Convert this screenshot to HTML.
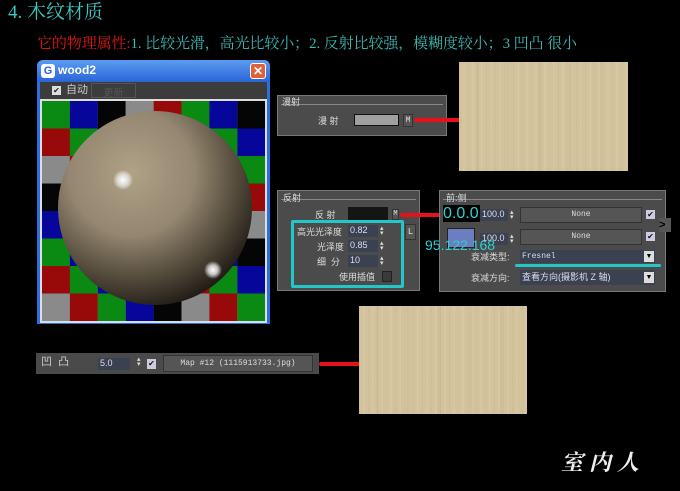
<!DOCTYPE html>
<html><head><meta charset="utf-8"><style>
*{margin:0;padding:0;box-sizing:border-box}
body{width:680px;height:491px;background:#000;position:relative;overflow:hidden;font-family:"Liberation Sans","Noto Sans CJK SC",sans-serif}
.a{position:absolute}
.t{color:#dcdcdc;font-size:9px;line-height:10px;white-space:nowrap}
.wood{background:
repeating-linear-gradient(90deg,rgba(150,120,70,.07) 0 1px,transparent 1px 4px,rgba(255,255,240,.07) 4px 6px,transparent 6px 9px),
repeating-linear-gradient(90deg,transparent 0 17px,rgba(160,130,80,.08) 17px 20px,transparent 20px 31px),
#d3c39c}
.pan{background:#4b4b4b;border:1px solid #777}
.in{background:#3a4150;color:#dde;font-size:9px;line-height:11px;padding-left:2px}
.btn{background:#555;border:1px solid #333;color:#ddd;font-size:8px;text-align:center;font-family:"Liberation Mono",monospace}
.red{background:#e8101a;height:4px;border-radius:2px}
.cy{color:#2ed0d0}
</style></head><body>
<div class="a cy" style="left:8px;top:2px;font-size:19px;line-height:22px;font-family:'Liberation Serif','Noto Serif CJK SC',serif;color:#3cc8c0">4. 木纹材质</div>
<div class="a" style="left:37px;top:35px;font-size:15px;line-height:18px;white-space:nowrap;letter-spacing:-0.1px;font-family:'Liberation Serif','Noto Serif CJK SC',serif;color:#3cb8b0"><span style="color:#e01818">它的物理属性:</span>1. 比较光滑，高光比较小；2. 反射比较强，模糊度较小；3 凹凸 很小</div>

<!-- window -->
<div class="a" style="left:37px;top:60px;width:233px;height:264px;background:#2a6ee0;border-radius:6px 6px 0 0"></div>
<div class="a" style="left:37px;top:60px;width:233px;height:22px;background:linear-gradient(#5a9cf0,#2a64d8);border-radius:6px 6px 0 0"></div>
<div class="a" style="left:41px;top:64px;width:14px;height:14px;background:#fff;border-radius:3px;color:#2a64d8;font-size:11px;font-weight:bold;text-align:center;line-height:14px">G</div>
<div class="a" style="left:58px;top:63px;color:#fff;font-size:12px;font-weight:bold">wood2</div>
<div class="a" style="left:250px;top:63px;width:16px;height:16px;background:#e0603a;border:1px solid #fff;border-radius:3px;color:#fff;font-size:12px;text-align:center;line-height:14px;font-weight:bold">✕</div>
<div class="a" style="left:40px;top:82px;width:227px;height:17px;background:#3c3c3c"></div>
<div class="a" style="left:52px;top:86px;width:9px;height:9px;background:#ddd;color:#222;font-size:8px;line-height:9px;text-align:center">✔</div>
<div class="a t" style="left:66px;top:85px;font-size:11px;line-height:11px;color:#ccc">自动</div>
<div class="a" style="left:91px;top:83px;width:45px;height:15px;border:1px solid #555;color:#555;font-size:10px;text-align:center">更新</div>
<div class="a" style="left:40px;top:99px;width:227px;height:224px;background:#ddd"></div>
<svg class="a" style="left:42px;top:101px" width="223" height="220" viewBox="0 0 223 220">
<defs>
<pattern id="ck" patternUnits="userSpaceOnUse" width="139.5" height="137.5">
<rect x="0" y="0" width="28" height="28" fill="#0a8a12"/><rect x="27.9" y="0" width="28" height="28" fill="#06069a"/><rect x="55.8" y="0" width="28" height="28" fill="#050505"/><rect x="83.7" y="0" width="28" height="28" fill="#8a8a8a"/><rect x="111.6" y="0" width="28" height="28" fill="#980a0a"/>
<rect x="0" y="27.5" width="28" height="28" fill="#980a0a"/><rect x="27.9" y="27.5" width="28" height="28" fill="#0a8a12"/><rect x="55.8" y="27.5" width="28" height="28" fill="#06069a"/><rect x="83.7" y="27.5" width="28" height="28" fill="#050505"/><rect x="111.6" y="27.5" width="28" height="28" fill="#8a8a8a"/>
<rect x="0" y="55" width="28" height="28" fill="#8a8a8a"/><rect x="27.9" y="55" width="28" height="28" fill="#980a0a"/><rect x="55.8" y="55" width="28" height="28" fill="#0a8a12"/><rect x="83.7" y="55" width="28" height="28" fill="#06069a"/><rect x="111.6" y="55" width="28" height="28" fill="#050505"/>
<rect x="0" y="82.5" width="28" height="28" fill="#050505"/><rect x="27.9" y="82.5" width="28" height="28" fill="#8a8a8a"/><rect x="55.8" y="82.5" width="28" height="28" fill="#980a0a"/><rect x="83.7" y="82.5" width="28" height="28" fill="#0a8a12"/><rect x="111.6" y="82.5" width="28" height="28" fill="#06069a"/>
<rect x="0" y="110" width="28" height="28" fill="#06069a"/><rect x="27.9" y="110" width="28" height="28" fill="#050505"/><rect x="55.8" y="110" width="28" height="28" fill="#8a8a8a"/><rect x="83.7" y="110" width="28" height="28" fill="#980a0a"/><rect x="111.6" y="110" width="28" height="28" fill="#0a8a12"/>
</pattern>
<radialGradient id="sg" cx="0.38" cy="0.32" r="0.72"><stop offset="0" stop-color="#b0a286"/><stop offset="0.45" stop-color="#948670"/><stop offset="0.8" stop-color="#4a4234"/><stop offset="1" stop-color="#1e1a14"/></radialGradient>
<radialGradient id="hl"><stop offset="0" stop-color="#fff"/><stop offset="0.5" stop-color="#eee" stop-opacity=".8"/><stop offset="1" stop-color="#fff" stop-opacity="0"/></radialGradient></defs>
<rect width="223" height="220" fill="url(#ck)"/>
<circle cx="113" cy="107" r="97" fill="url(#sg)"/>
<circle cx="81" cy="79" r="10" fill="url(#hl)"/>
<circle cx="171" cy="169" r="9" fill="url(#hl)"/>
</svg>

<!-- diffuse panel -->
<div class="a pan" style="left:277px;top:95px;width:170px;height:41px"></div>
<div class="a" style="left:281px;top:104px;width:162px;height:1px;background:#888"></div>
<div class="a t" style="left:282px;top:97px">漫射</div>
<div class="a t" style="left:318px;top:116px">漫 射</div>
<div class="a" style="left:354px;top:114px;width:45px;height:12px;background:#a0a0a0;border:1px solid #111"></div>
<div class="a btn" style="left:403px;top:114px;width:10px;height:13px;line-height:11px">M</div>
<div class="a red" style="left:414px;top:118px;width:59px"></div>
<div class="a wood" style="left:459px;top:62px;width:169px;height:109px"></div>

<!-- reflection panel -->
<div class="a pan" style="left:277px;top:190px;width:143px;height:101px"></div>
<div class="a" style="left:281px;top:199px;width:135px;height:1px;background:#888"></div>
<div class="a t" style="left:283px;top:193px">反射</div>
<div class="a t" style="left:315px;top:210px">反 射</div>
<div class="a" style="left:348px;top:207px;width:40px;height:14px;background:#151515"></div>
<div class="a btn" style="left:392px;top:209px;width:7px;height:11px;line-height:9px;font-size:7px">M</div>
<div class="a red" style="left:400px;top:213px;width:42px"></div>
<div class="a t" style="left:297px;top:227px">高光光泽度</div>
<div class="a in" style="left:348px;top:225px;width:30px;height:12px">0.82</div>
<div class="a t" style="left:317px;top:242px">光泽度</div>
<div class="a in" style="left:348px;top:240px;width:30px;height:12px">0.85</div>
<div class="a t" style="left:317px;top:257px">细 &nbsp;分</div>
<div class="a in" style="left:348px;top:255px;width:30px;height:12px">10</div>
<div class="a t" style="left:339px;top:272px">使用插值</div>
<div class="a" style="left:382px;top:271px;width:10px;height:11px;background:#3a3a3a;border:1px solid #222"></div>
<div class="a t" style="left:380px;top:226px;font-size:7px;line-height:5px">▴<br>▾</div>
<div class="a t" style="left:380px;top:241px;font-size:7px;line-height:5px">▴<br>▾</div>
<div class="a t" style="left:380px;top:256px;font-size:7px;line-height:5px">▴<br>▾</div>
<div class="a btn" style="left:405px;top:224px;width:11px;height:16px;line-height:14px;font-size:9px">L</div>
<div class="a" style="left:291px;top:220px;width:113px;height:68px;border:3px solid #22c8c8;border-radius:2px"></div>

<!-- falloff panel -->
<div class="a pan" style="left:439px;top:190px;width:227px;height:102px"></div>
<div class="a" style="left:443px;top:199px;width:219px;height:1px;background:#888"></div>
<div class="a t" style="left:446px;top:193px">前:侧</div>
<div class="a in" style="left:480px;top:209px;width:28px;height:12px">100.0</div>
<div class="a btn" style="left:520px;top:207px;width:122px;height:16px;line-height:14px">None</div>
<div class="a" style="left:646px;top:210px;width:9px;height:9px;background:#ccd;font-size:8px;line-height:9px;color:#113;text-align:center">✔</div>
<div class="a" style="left:447px;top:228px;width:28px;height:20px;background:#6a7ec0;border:1px solid #222"></div>
<div class="a in" style="left:480px;top:233px;width:28px;height:12px">100.0</div>
<div class="a btn" style="left:520px;top:229px;width:122px;height:16px;line-height:14px">None</div>
<div class="a" style="left:646px;top:232px;width:9px;height:9px;background:#ccd;font-size:8px;line-height:9px;color:#113;text-align:center">✔</div>
<div class="a" style="left:659px;top:218px;width:12px;height:14px;background:#555;color:#000;font-size:11px;font-weight:bold;line-height:14px">&gt;</div>
<div class="a t" style="left:510px;top:210px;font-size:7px;line-height:5px">▴<br>▾</div>
<div class="a t" style="left:510px;top:234px;font-size:7px;line-height:5px">▴<br>▾</div>
<div class="a cy" style="left:443px;top:205px;font-size:16px;line-height:17px;background:#000;padding-right:1px">0.0.0</div>
<div class="a cy" style="left:425px;top:238px;font-size:14px;line-height:15px">95.122.168</div>
<div class="a t" style="left:471px;top:252px">衰减类型:</div>
<div class="a in" style="left:520px;top:250px;width:135px;height:13px;font-family:'Liberation Mono',monospace;font-size:8px;line-height:13px">Fresnel</div>
<div class="a" style="left:644px;top:251px;width:10px;height:11px;background:#ddd;color:#000;font-size:7px;text-align:center;line-height:11px">▼</div>
<div class="a" style="left:515px;top:264px;width:146px;height:3px;background:#22c8c8;border-radius:2px"></div>
<div class="a t" style="left:471px;top:273px">衰减方向:</div>
<div class="a in" style="left:520px;top:270px;width:135px;height:15px;line-height:15px">查看方向(摄影机 Z 轴)</div>
<div class="a" style="left:644px;top:272px;width:10px;height:11px;background:#ddd;color:#000;font-size:7px;text-align:center;line-height:11px">▼</div>

<!-- bottom bar -->
<div class="a" style="left:36px;top:353px;width:283px;height:21px;background:#4a4a4a"></div>
<div class="a t" style="left:41px;top:357px;font-size:11px;color:#ccc">凹 &nbsp;凸</div>
<div class="a in" style="left:98px;top:358px;width:32px;height:12px">5.0</div>
<div class="a t" style="left:137px;top:357px;font-size:7px;line-height:5px">▴<br>▾</div>
<div class="a" style="left:147px;top:359px;width:9px;height:10px;background:#ccd;font-size:8px;line-height:10px;color:#113;text-align:center">✔</div>
<div class="a btn" style="left:163px;top:355px;width:150px;height:17px;line-height:15px">Map #12 (1115913733.jpg)</div>
<div class="a red" style="left:319px;top:362px;width:54px"></div>
<div class="a wood" style="left:359px;top:306px;width:168px;height:108px"></div>

<div class="a" style="left:561px;top:446px;font-size:22px;font-weight:bold;color:#eee;letter-spacing:6px;font-family:'Noto Serif CJK SC',serif;font-style:italic">室内人</div>
</body></html>
